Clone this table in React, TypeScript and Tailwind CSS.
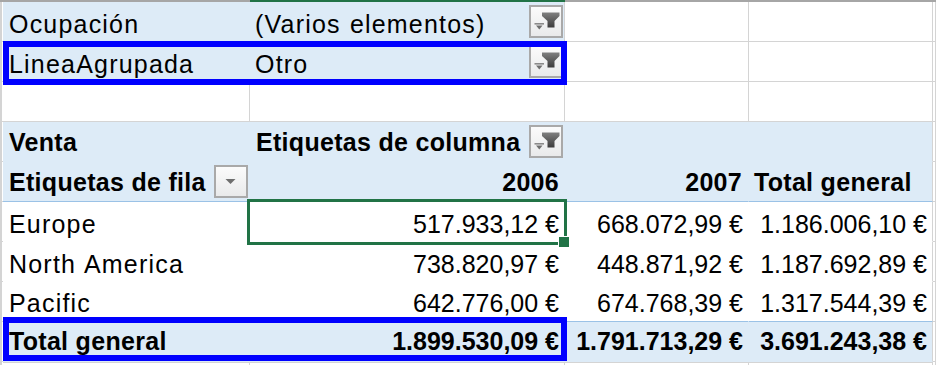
import React from "react";

const font = "font-['Liberation_Sans',Arial,sans-serif] text-[25px] leading-none text-black";
const reg = "tracking-[1.2px] [word-spacing:1px]";
const bld = "font-bold tracking-[0.3px]";
const grid = "border-r border-b border-[#d4d4d4] bg-white";
const blue = "border-r border-b border-[#ddebf7] bg-[#ddebf7]";

const strip = "w-[3px] shrink-0 border-l-2 border-b border-[#d4d4d4] bg-white";
const colA = "w-[247px] shrink-0";
const colB = "w-[315px] shrink-0";
const colC = "w-[184px] shrink-0";
const colD = "w-[184px] shrink-0";
const colE = "flex-1";

const FilterButton = ({ funnel = true }: { funnel?: boolean }) => (
  <div className="mr-[1px] flex h-[33px] w-[34px] shrink-0 self-center border-2 border-[#a9a9a9] bg-linear-to-b from-[#fbfbfb] to-[#e9eaeb]">
    <svg viewBox="0 0 30 29" className="h-full w-full">
      <defs>
        <linearGradient id="fn" x1="0" y1="0" x2="0" y2="1">
          <stop offset="0" stopColor="#808080" />
          <stop offset="1" stopColor="#3c3c3c" />
        </linearGradient>
      </defs>
      {funnel ? (
        <>
          <polygon points="11,5.5 28.5,5.5 28.5,9 23.5,14 23.5,20.5 16.5,20.5 16.5,14 11,9" fill="url(#fn)" />
          <rect x="3.5" y="16" width="9.5" height="1.6" fill="#8a8a8a" />
          <polygon points="5,18.6 11.5,18.6 8.25,22.5" fill="#6e6e6e" />
        </>
      ) : (
        <polygon points="9.5,12 19.5,12 14.5,17" fill="#6e6e6e" />
      )}
    </svg>
  </div>
);

const App = () => {
  return (
    <div className={`relative h-[365px] w-[936px] overflow-hidden bg-white ${font}`}>
      {/* column header edge */}
      <div className="flex h-[2px]">
        <div className="w-[3px] shrink-0 bg-[#a6a6a6]" />
        <div className={`${colA} bg-[#a6a6a6]`} />
        <div className={`${colB} bg-[#217346]`} />
        <div className={`${colC} bg-[#a6a6a6]`} />
        <div className={`${colD} bg-[#a6a6a6]`} />
        <div className={`${colE} bg-[#a6a6a6]`} />
      </div>

      {/* report filters */}
      <div className="flex h-[40px]">
        <div className={strip} />
        <div className={`${colA} ${blue} flex pl-[6px]`}>
          <span className={`${reg} self-end pb-[4px]`}>Ocupación</span>
        </div>
        <div className={`${colB} flex justify-between border-b border-r border-b-[#ddebf7] border-r-[#d4d4d4] bg-[#ddebf7] pl-[5px]`}>
          <span className={`${reg} self-end pb-[4px]`}>(Varios elementos)</span>
          <FilterButton />
        </div>
        <div className={`${colC} ${grid}`} />
        <div className={`${colD} ${grid}`} />
        <div className={`${colE} ${grid}`} />
      </div>
      <div className="flex h-[40px]">
        <div className={strip} />
        <div className={`${colA} ${blue} flex pl-[6px]`}>
          <span className={`${reg} self-end pb-[4px]`}>LineaAgrupada</span>
        </div>
        <div className={`${colB} flex justify-between border-b border-r border-b-[#ddebf7] border-r-[#d4d4d4] bg-[#ddebf7] pl-[5px]`}>
          <span className={`${reg} self-end pb-[4px]`}>Otro</span>
          <FilterButton />
        </div>
        <div className={`${colC} ${grid}`} />
        <div className={`${colD} ${grid}`} />
        <div className={`${colE} ${grid}`} />
      </div>
      <div className="flex h-[40px]">
        <div className={strip} />
        <div className={`${colA} ${grid}`} />
        <div className={`${colB} ${grid}`} />
        <div className={`${colC} ${grid}`} />
        <div className={`${colD} ${grid}`} />
        <div className={`${colE} ${grid}`} />
      </div>

      {/* pivot header */}
      <div className="flex h-[40px]">
        <div className={strip} />
        <div className={`${colA} ${blue} flex pl-[6px]`}>
          <span className={`${bld} self-end pb-[6px]`}>Venta</span>
        </div>
        <div className={`${colB} ${blue} flex justify-between pl-[6px]`}>
          <span className={`${bld} self-end pb-[6px]`}>Etiquetas de columna</span>
          <FilterButton />
        </div>
        <div className={`${colC} ${blue}`} />
        <div className={`${colD} border-b border-r border-b-[#ddebf7] border-r-[#d4d4d4] bg-[#ddebf7]`} />
        <div className={`${colE} ${grid}`} />
      </div>
      <div className="flex h-[40px]">
        <div className={strip} />
        <div className={`${colA} flex justify-between border-b border-r border-b-[#9bc2e6] border-r-[#ddebf7] bg-[#ddebf7] pl-[6px]`}>
          <span className={`${bld} self-end pb-[6px]`}>Etiquetas de fila</span>
          <FilterButton funnel={false} />
        </div>
        <div className={`${colB} flex justify-end border-b border-r border-b-[#9bc2e6] border-r-[#ddebf7] bg-[#ddebf7] pr-[5px]`}>
          <span className={`${bld} self-end pb-[6px]`}>2006</span>
        </div>
        <div className={`${colC} flex justify-end border-b border-r border-b-[#9bc2e6] border-r-[#ddebf7] bg-[#ddebf7] pr-[6px]`}>
          <span className={`${bld} self-end pb-[6px]`}>2007</span>
        </div>
        <div className={`${colD} flex border-b border-r border-b-[#9bc2e6] border-r-[#d4d4d4] bg-[#ddebf7] pl-[5px]`}>
          <span className={`${bld} self-end pb-[6px]`}>Total general</span>
        </div>
        <div className={`${colE} ${grid}`} />
      </div>

      {/* data rows */}
      {[
        ["Europe", "517.933,12 €", "668.072,99 €", "1.186.006,10 €", "pb-[4px]"],
        ["North America", "738.820,97 €", "448.871,92 €", "1.187.692,89 €", "pb-[4px]"],
        ["Pacific", "642.776,00 €", "674.768,39 €", "1.317.544,39 €", "pb-[5px]"],
      ].map(([label, y06, y07, total, pb], i) => {
        const line = i === 2 ? "border-b-[#9bc2e6]" : "border-b-white";
        return (
          <div key={label} className="flex h-[40px]">
            <div className={strip} />
            <div className={`${colA} flex border-b border-r border-r-white ${line} bg-white pl-[6px]`}>
              <span className={`${reg} self-end ${pb}`}>{label}</span>
            </div>
            <div className={`${colB} flex justify-end border-b border-r border-r-white ${line} bg-white pr-[5px]`}>
              <span className={`self-end ${pb}`}>{y06}</span>
            </div>
            <div className={`${colC} flex justify-end border-b border-r border-r-white ${line} bg-white pr-[5px]`}>
              <span className={`self-end ${pb}`}>{y07}</span>
            </div>
            <div className={`${colD} flex justify-end border-b border-r border-r-[#d4d4d4] ${line} bg-white pr-[5px]`}>
              <span className={`self-end ${pb}`}>{total}</span>
            </div>
            <div className={`${colE} ${grid}`} />
          </div>
        );
      })}

      {/* grand total */}
      <div className="flex h-[40px]">
        <div className={strip} />
        <div className={`${colA} ${blue} flex pl-[6px]`}>
          <span className={`${bld} self-end pb-[7px]`}>Total general</span>
        </div>
        <div className={`${colB} ${blue} flex justify-end pr-[5px]`}>
          <span className="self-end pb-[7px] font-bold">1.899.530,09 €</span>
        </div>
        <div className={`${colC} ${blue} flex justify-end pr-[5px]`}>
          <span className="self-end pb-[7px] font-bold">1.791.713,29 €</span>
        </div>
        <div className={`${colD} flex justify-end border-b border-r border-b-[#ddebf7] border-r-[#d4d4d4] bg-[#ddebf7] pr-[5px]`}>
          <span className="self-end pb-[7px] font-bold">3.691.243,38 €</span>
        </div>
        <div className={`${colE} ${grid}`} />
      </div>
      <div className="flex h-[40px]">
        <div className={strip} />
        <div className={`${colA} ${grid} border-t border-t-[#d4d4d4]`} />
        <div className={`${colB} ${grid} border-t border-t-[#d4d4d4]`} />
        <div className={`${colC} ${grid} border-t border-t-[#d4d4d4]`} />
        <div className={`${colD} ${grid} border-t border-t-[#d4d4d4]`} />
        <div className={`${colE} ${grid}`} />
      </div>

      {/* annotation frames */}
      <div className="absolute left-[3px] top-[41px] h-[44px] w-[564px] border-[6px] border-[#0000ff]" />
      <div className="absolute left-[3px] top-[317px] h-[44px] w-[564px] border-[6px] border-[#0000ff]" />

      {/* active cell */}
      <div className="absolute left-[247px] top-[199px] h-[46px] w-[320px] border-[3px] border-[#217346]" />
      <div className="absolute left-[558px] top-[236px] h-[12px] w-[12px] border border-white bg-[#217346]" />
    </div>
  );
};

export default App;
